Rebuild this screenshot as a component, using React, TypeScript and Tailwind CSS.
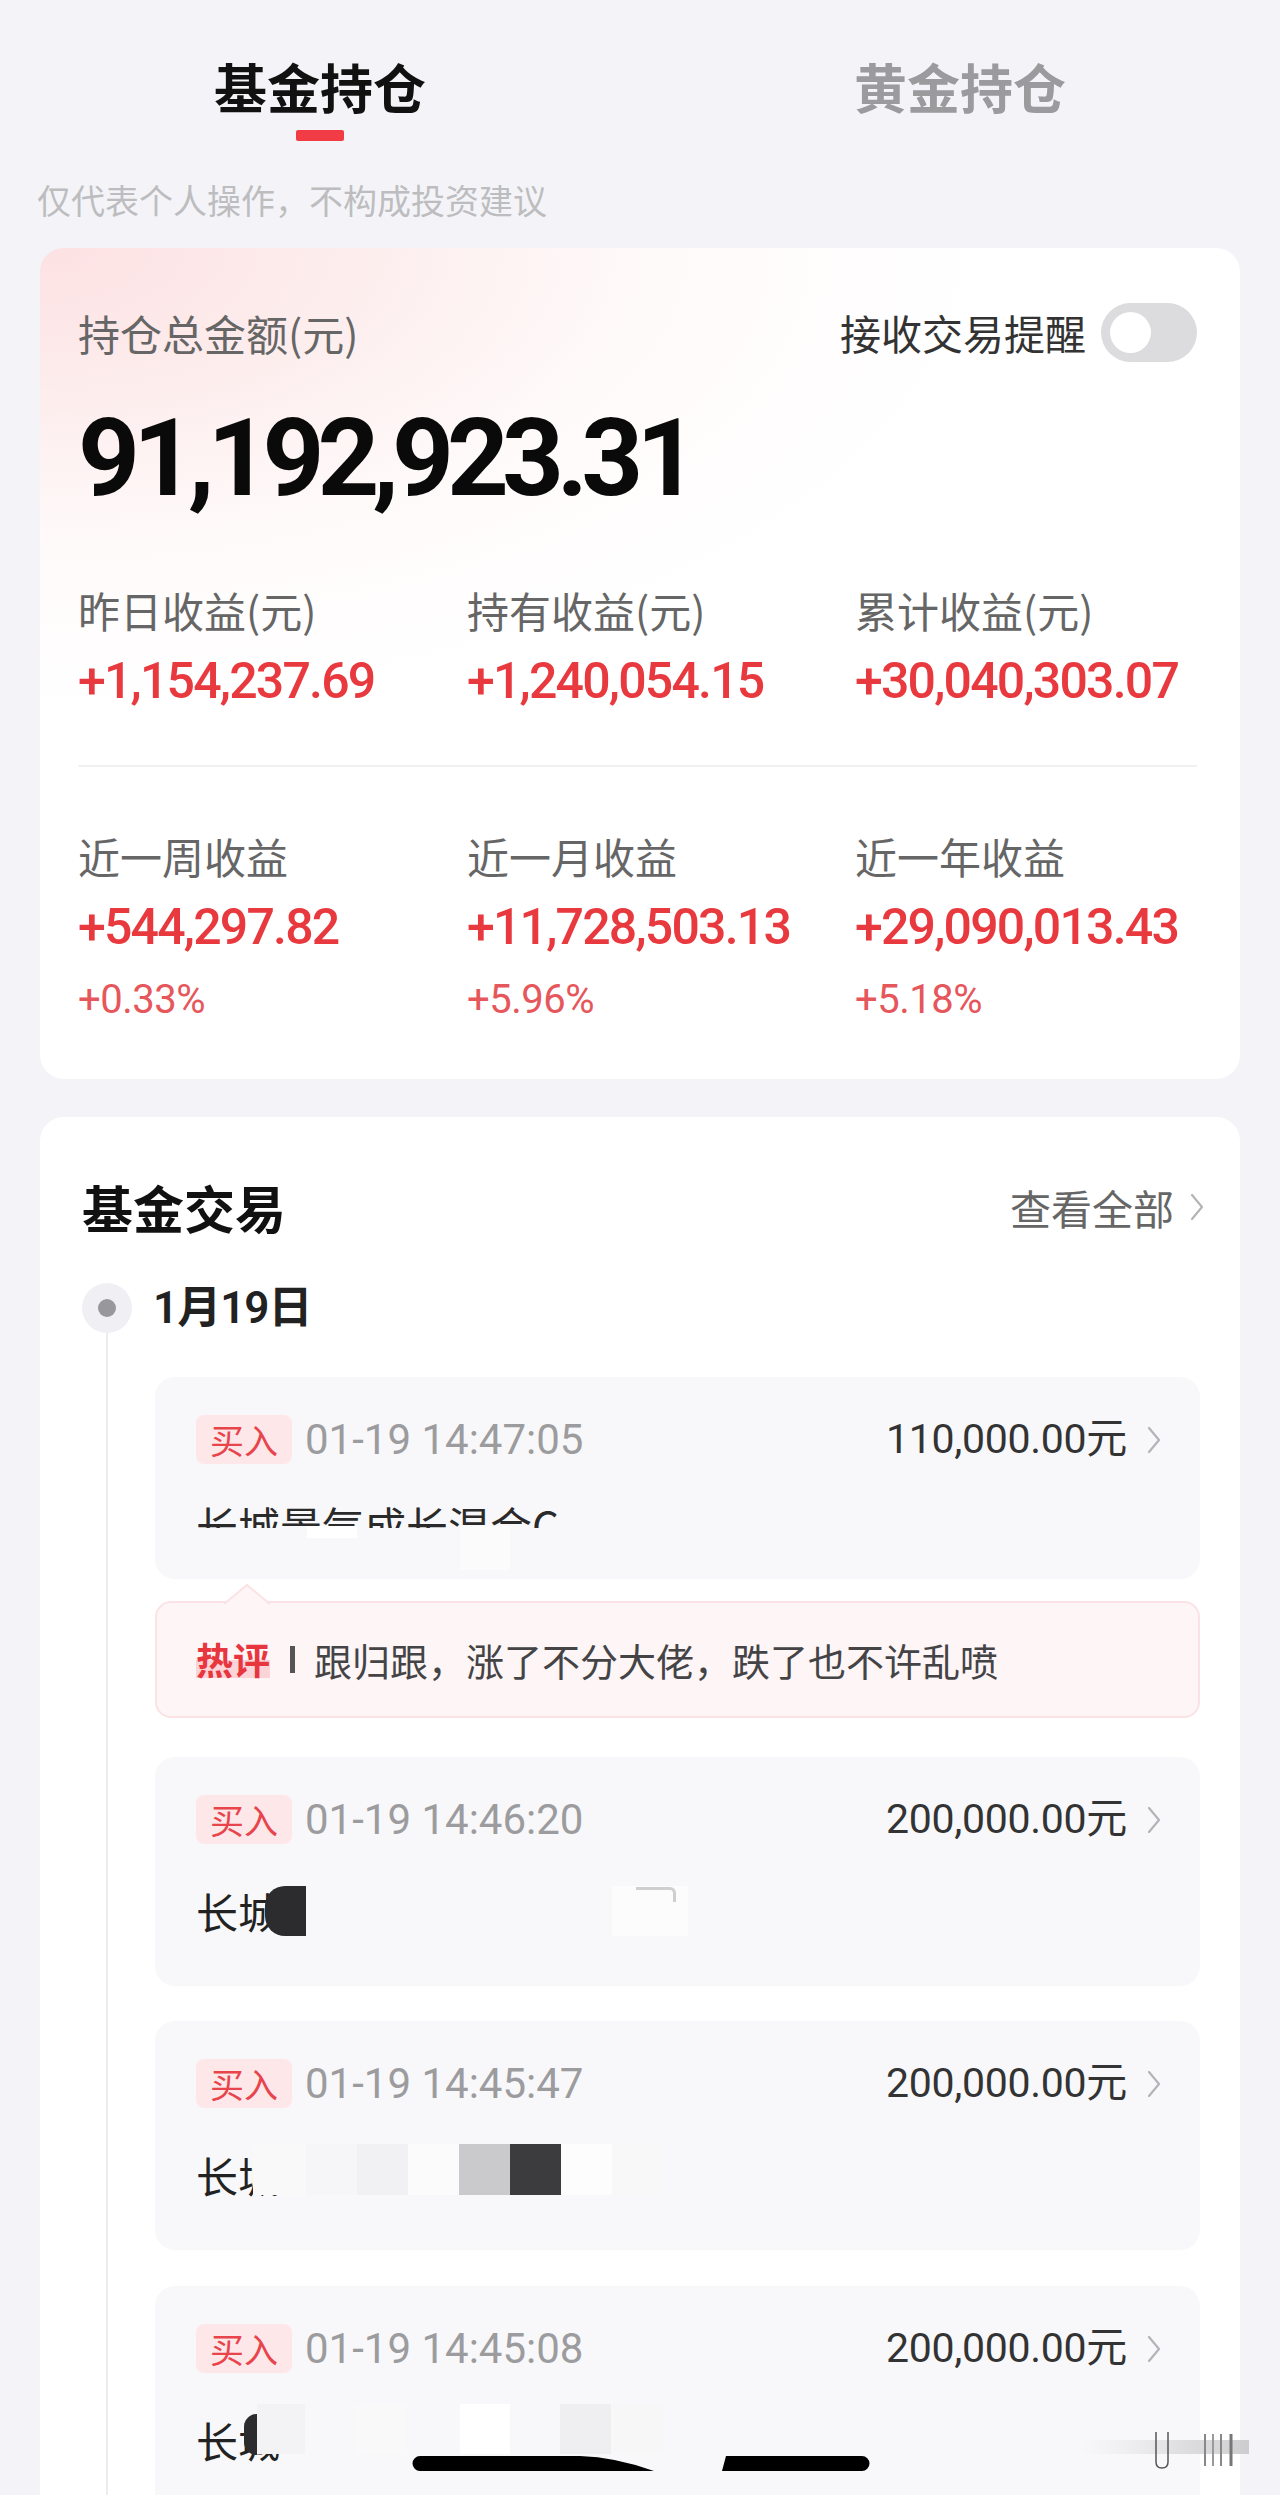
import React from "react";

const NUM = "[font-family:Roboto,'Noto_Sans_CJK_SC',sans-serif]";

function Chevron() {
  return (
    <svg width="18" height="30" viewBox="0 0 18 30" className="shrink-0">
      <polyline points="4,3 14,15 4,27" fill="none" stroke="#b4b4b8" strokeWidth="2.2" strokeLinecap="round" strokeLinejoin="round" />
    </svg>
  );
}

function Stat({ label, value, pct }: { label: string; value: string; pct?: string }) {
  return (
    <div className="flex flex-col">
      <div className="text-[42px] leading-[42px] text-[#666666] whitespace-nowrap">{label}</div>
      <div className={`${NUM} mt-[25px] text-[50px] leading-[50px] font-medium tracking-[-1.8px] text-[#e8393f] whitespace-nowrap`}>{value}</div>
      {pct && <div className={`${NUM} mt-[28px] text-[40px] leading-[40px] tracking-[-0.5px] text-[#e6575c]`}>{pct}</div>}
    </div>
  );
}

function TradeHeader({ time, amount }: { time: string; amount: string }) {
  return (
    <div className="flex items-center h-[49px]">
      <div className="w-[96px] h-[49px] rounded-[8px] bg-[#fde7e9] flex items-center justify-center text-[34px] leading-[34px] text-[#e8444b]">买入</div>
      <div className={`${NUM} ml-[13px] text-[42px] leading-[42px] text-[#9c9c9f]`}>{time}</div>
      <div className="flex-1" />
      <div className={`${NUM} text-[41px] leading-[41px] tracking-[-0.3px] text-[#333333]`}>{amount}</div>
      <div className="ml-[18px]"><Chevron /></div>
    </div>
  );
}

export default function App() {
  return (
    <div className="relative w-[1280px] h-[2495px] overflow-hidden bg-[#f4f4f8] [font-family:'Noto_Sans_CJK_SC',sans-serif]">
      {/* Tabs */}
      <div className="grid grid-cols-2 pt-[60px]">
        <div className="flex flex-col items-center">
          <div className="text-[53px] leading-[52px] font-bold text-[#111111]">基金持仓</div>
          <div className="mt-[18px] w-[48px] h-[11px] rounded-[2px] bg-[#f23c45]" />
        </div>
        <div className="flex flex-col items-center">
          <div className="text-[53px] leading-[52px] font-bold text-[#9b9b9e]">黄金持仓</div>
        </div>
      </div>

      <div className="mt-[42px] pl-[37px] text-[34px] leading-[34px] text-[#bdbdc0]">仅代表个人操作，不构成投资建议</div>

      {/* Holdings card */}
      <div className="mt-[31px] mx-[40px] rounded-[24px] bg-white bg-[radial-gradient(950px_460px_at_0%_0%,#fde1e3_0%,#fdeeee_35%,#fffafa_65%,#ffffff_100%)] pt-[55px] pb-[59px] pl-[38px] pr-[43px]">
        <div className="flex items-center justify-between h-[59px]">
          <div className="text-[42px] leading-[42px] text-[#666666]">持仓总金额(元)</div>
          <div className="flex items-center">
            <div className="text-[41px] leading-[41px] text-[#333333]">接收交易提醒</div>
            <div className="ml-[15px] w-[96px] h-[59px] rounded-full bg-[#dcdcde] flex items-center pl-[9px]">
              <div className="w-[41px] h-[41px] rounded-full bg-white" />
            </div>
          </div>
        </div>
        <div className={`${NUM} mt-[44px] text-[108px] leading-[104px] font-bold tracking-[-7px] text-[#0a0a0a]`}>91,192,923.31</div>

        <div className="mt-[79px] grid grid-cols-[389px_388px_1fr]">
          <Stat label="昨日收益(元)" value="+1,154,237.69" />
          <Stat label="持有收益(元)" value="+1,240,054.15" />
          <Stat label="累计收益(元)" value="+30,040,303.07" />
        </div>

        <div className="mt-[59px] h-[2px] bg-[#f1f1f3]" />

        <div className="mt-[68px] grid grid-cols-[389px_388px_1fr]">
          <Stat label="近一周收益" value="+544,297.82" pct="+0.33%" />
          <Stat label="近一月收益" value="+11,728,503.13" pct="+5.96%" />
          <Stat label="近一年收益" value="+29,090,013.43" pct="+5.18%" />
        </div>
      </div>

      {/* Trades card */}
      <div className="mt-[38px] mx-[40px] rounded-[24px] bg-white pb-[40px]">
        <div className="flex items-center justify-between pt-[66px] pl-[42px] pr-[34px] h-[114px]">
          <div className="text-[51px] leading-[48px] font-bold text-[#111111]">基金交易</div>
          <div className="flex items-center">
            <div className="text-[41px] leading-[41px] text-[#666666]">查看全部</div>
            <div className="ml-[14px]"><Chevron /></div>
          </div>
        </div>

        <div className="mt-[53px] pl-[42px] flex items-center h-[48px]">
          <div className="w-[50px] h-[50px] rounded-full bg-[#f0f0f4] flex items-center justify-center">
            <div className="w-[18px] h-[18px] rounded-full bg-[#98989c]" />
          </div>
          <div className={`${NUM} ml-[21px] text-[44px] leading-[43px] font-semibold tracking-[-1px] text-[#222222]`}>1月19日</div>
        </div>

        <div className="flex pl-[42px] pr-[40px]">
          <div className="w-[73px] shrink-0">
            <div className="ml-[24px] w-[2px] h-full bg-[#ececf0]" />
          </div>
          <div className="flex-1 flex flex-col">
            {/* Item 1 */}
            <div className="mt-[45px] h-[202px] rounded-[20px] bg-[#f8f8fa] pt-[38px] pl-[41px] pr-[37px]">
              <TradeHeader time="01-19 14:47:05" amount="110,000.00元" />
              <div className="relative mt-[40px] h-[42px] w-fit">
                <div className="text-[42px] leading-[42px] text-[#2a2a2a] whitespace-nowrap">长城景气成长混合C</div>
                <div className="absolute left-[-4px] right-[-60px] top-[24px] h-[46px] bg-[#f8f8fa]" />
                <div className="absolute left-[111px] top-[22px] w-[50px] h-[12px] bg-[#ffffff]" />
                <div className="absolute left-[264px] top-[22px] w-[50px] h-[44px] bg-[#fbfbfc]" />
              </div>
            </div>

            {/* Hot comment */}
            <div className="relative mt-[22px] h-[117px] rounded-[16px] border-2 border-[#fbe2e5] bg-[#fef5f6] flex items-center pl-[39px]">
              <svg className="absolute left-[66px] -top-[19px]" width="48" height="21" viewBox="0 0 48 21">
                <polygon points="1,21 24,1 47,21" fill="#fef5f6" />
                <polyline points="1,20 24,1 47,20" fill="none" stroke="#fbe2e5" strokeWidth="2" />
              </svg>
              <div className="text-[37px] leading-[37px] font-bold text-[#e8363f] bg-[linear-gradient(to_bottom,transparent_52%,#fbd4d8_52%)]">热评</div>
              <div className="ml-[20px] w-[5px] h-[27px] bg-[#555558]" />
              <div className="ml-[19px] text-[38px] leading-[38px] text-[#444446]">跟归跟，涨了不分大佬，跌了也不许乱喷</div>
            </div>

            {/* Item 2 */}
            <div className="mt-[39px] h-[229px] rounded-[20px] bg-[#f8f8fa] pt-[38px] pl-[41px] pr-[37px]">
              <TradeHeader time="01-19 14:46:20" amount="200,000.00元" />
              <div className="mt-[42px] h-[50px] flex items-center">
                <div className="text-[42px] leading-[42px] text-[#222222]">长城</div>
                <div className="-ml-[15px] w-[41px] h-[50px] rounded-l-[20px] bg-[#2c2c2e]" />
                <div className="ml-[306px] self-start w-[76px] h-[50px] bg-[#fcfcfd] flex justify-end">
                  <div className="mt-[1px] mr-[12px] w-[40px] h-[15px] border-t-[3px] border-r-[3px] border-[#cfcfd2] rounded-tr-[6px]" />
                </div>
              </div>
            </div>

            {/* Item 3 */}
            <div className="mt-[35px] h-[229px] rounded-[20px] bg-[#f8f8fa] pt-[38px] pl-[41px] pr-[37px]">
              <TradeHeader time="01-19 14:45:47" amount="200,000.00元" />
              <div className="mt-[42px] h-[50px] flex items-center">
                <div className="text-[42px] leading-[42px] text-[#222222]">长城</div>
                <div className="-ml-[27px] flex -mt-[12px]">
                  <div className="w-[53px] h-[51px] bg-[#f9f9fa]" />
                  <div className="w-[51px] h-[51px] bg-[#f6f6f8]" />
                  <div className="w-[51px] h-[51px] bg-[#f1f1f3]" />
                  <div className="w-[51px] h-[51px] bg-[#fbfbfc]" />
                  <div className="w-[51px] h-[51px] bg-[#cacacd]" />
                  <div className="w-[51px] h-[51px] bg-[#3c3c3f]" />
                  <div className="w-[51px] h-[51px] bg-[#fdfdfd]" />
                  <div className="w-[49px] h-[51px] bg-[#f8f8f9]" />
                </div>
              </div>
            </div>

            {/* Item 4 */}
            <div className="mt-[36px] h-[229px] rounded-[20px] bg-[#f8f8fa] pt-[38px] pl-[41px] pr-[37px]">
              <TradeHeader time="01-19 14:45:08" amount="200,000.00元" />
              <div className="mt-[42px] h-[50px] flex items-center">
                <div className="text-[42px] leading-[42px] text-[#222222]">长城</div>
                <div className="-ml-[36px] w-[13px] h-[41px] rounded-l-full bg-[#2c2c2e] -mt-[12px]" />
                <div className="flex -mt-[22px]">
                  <div className="w-[48px] h-[50px] bg-[#f3f3f5]" />
                  <div className="w-[50px] h-[50px] bg-[#f8f8fa]" />
                  <div className="w-[51px] h-[50px] bg-[#f9f9fa]" />
                  <div className="w-[54px] h-[50px] bg-[#f8f8fa]" />
                  <div className="w-[50px] h-[50px] bg-[#ffffff]" />
                  <div className="w-[50px] h-[50px] bg-[#f8f8fa]" />
                  <div className="w-[51px] h-[50px] bg-[#efeff1]" />
                  <div className="w-[54px] h-[50px] bg-[#f7f7f8]" />
                </div>
              </div>
            </div>
          </div>
        </div>
      </div>

      {/* Black scribble bars overlay */}
      <svg className="absolute left-[410px] top-[2454px]" width="465" height="20" viewBox="0 0 465 20">
        <path d="M10 2 L170 2 Q205 3 244 17 L10 17 A7.5 7.5 0 0 1 10 2 Z" fill="#000000" />
        <path d="M316 2 L452 2 A7.5 7.5 0 0 1 452 17 L312 17 Z" fill="#000000" />
      </svg>

      {/* Faint watermark fragment */}
      <svg className="absolute left-[1079px] top-[2428px]" width="170" height="42" viewBox="0 0 170 42">
        <defs>
          <linearGradient id="wm" x1="0" x2="1" y1="0" y2="0">
            <stop offset="0" stopColor="#e6e6e8" stopOpacity="0" />
            <stop offset="0.6" stopColor="#d8d8da" stopOpacity="0.8" />
            <stop offset="1" stopColor="#c8c8ca" stopOpacity="0.9" />
          </linearGradient>
        </defs>
        <rect x="0" y="12" width="170" height="14" fill="url(#wm)" />
        <path d="M77 4 L77 34 Q77 40 83 40 Q89 40 89 34 L89 4" fill="none" stroke="#555" strokeWidth="1.5" />
        <line x1="126" y1="6" x2="126" y2="38" stroke="#888" strokeWidth="2" />
        <line x1="134" y1="6" x2="134" y2="38" stroke="#999" strokeWidth="2" />
        <line x1="142" y1="6" x2="142" y2="38" stroke="#888" strokeWidth="2" />
        <line x1="152" y1="6" x2="152" y2="38" stroke="#777" strokeWidth="3" />
      </svg>
    </div>
  );
}
